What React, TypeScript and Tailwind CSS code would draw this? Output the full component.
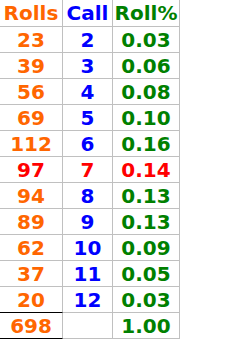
import React from "react";

// each row: rolls, call, roll percentage
interface Row {
    rolls: number;
    call: number;
    pct: string;
}

const rows: Row[] = [
    { rolls: 23, call: 2, pct: "0.03" },
    { rolls: 39, call: 3, pct: "0.06" },
    { rolls: 56, call: 4, pct: "0.08" },
    { rolls: 69, call: 5, pct: "0.10" },
    { rolls: 112, call: 6, pct: "0.16" },
    { rolls: 97, call: 7, pct: "0.14" },
    { rolls: 94, call: 8, pct: "0.13" },
    { rolls: 89, call: 9, pct: "0.13" },
    { rolls: 62, call: 10, pct: "0.09" },
    { rolls: 37, call: 11, pct: "0.05" },
    { rolls: 20, call: 12, pct: "0.03" },
];

const cell = "flex items-center justify-center border-r border-b border-[#c0c0c0] h-[26px] whitespace-nowrap";

const App: React.FC = () => {
    return (
        <div className="w-[241px] h-[340px] bg-white font-['DejaVu_Sans',Verdana,sans-serif] font-bold text-[20px] leading-none">
            <div className="grid grid-cols-[63px_50px_67px] w-[180px]">
                {/* header */}
                <div className={`${cell} h-[27px] text-[#ff6600]`}>Rolls</div>
                <div className={`${cell} h-[27px] text-[#0000ff]`}>Call</div>
                <div className={`${cell} h-[27px] text-[#008000]`}>Roll%</div>

                {rows.map((r, i) => {
                    const red = r.call === 7;
                    const last = i === rows.length - 1;
                    return (
                        <React.Fragment key={r.call}>
                            <div className={`${cell} ${red ? "text-[#ff0000]" : "text-[#ff6600]"} ${last ? "border-b-black" : ""}`}>{r.rolls}</div>
                            <div className={`${cell} ${red ? "text-[#ff0000]" : "text-[#0000ff]"}`}>{r.call}</div>
                            <div className={`${cell} ${red ? "text-[#ff0000]" : "text-[#008000]"}`}>{r.pct}</div>
                        </React.Fragment>
                    );
                })}

                {/* totals */}
                <div className={`${cell} text-[#ff6600] border-b-black`}>698</div>
                <div className={cell}></div>
                <div className={`${cell} text-[#008000]`}>1.00</div>
            </div>
        </div>
    );
};

export default App;
